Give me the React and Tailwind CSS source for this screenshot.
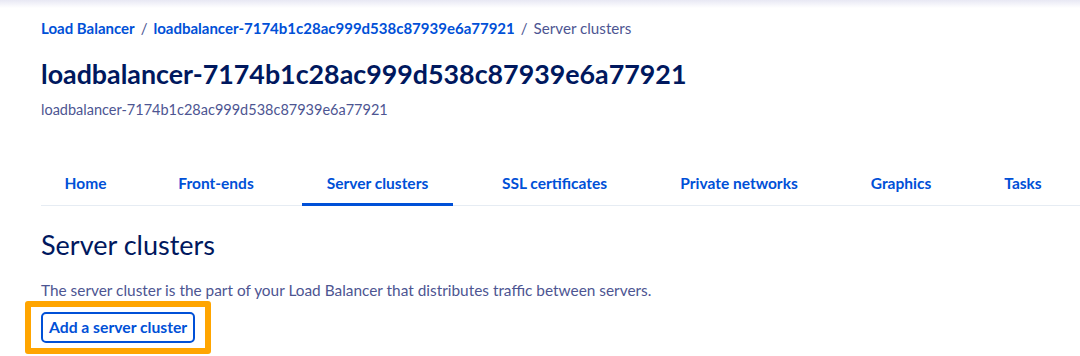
const tabs = [
  { label: 'Home', w: 'w-[89px]' },
  { label: 'Front-ends', w: 'w-[123px]' },
  { label: 'Server clusters', w: 'w-[151px]', active: true },
  { label: 'SSL certificates', w: 'w-[154px]' },
  { label: 'Private networks', w: 'w-[166px]' },
  { label: 'Graphics', w: 'w-[109px]' },
  { label: 'Tasks', w: 'w-[86px]' },
];

export default function App() {
  return (
    <div className="relative w-[1080px] h-[356px] bg-white overflow-hidden font-['Lato',sans-serif] text-[#4d5592]">
      <div className="h-[8px] bg-gradient-to-b from-[#e8e8f4] to-white" />
      <div className="pl-[41px]">
        <nav className="flex items-center h-[40px] text-[15px]">
          <a className="font-bold text-[#0050d7]">Load Balancer</a>
          <span className="mx-[6px]">/</span>
          <a className="font-bold text-[#0050d7]">loadbalancer-7174b1c28ac999d538c87939e6a77921</a>
          <span className="mx-[6px]">/</span>
          <span className="text-[15.2px]">Server clusters</span>
        </nav>
        <h1 className="mt-[8px] text-[26.8px] leading-[36px] font-bold text-[#00185e]">loadbalancer-7174b1c28ac999d538c87939e6a77921</h1>
        <p className="mt-[9px] text-[14.5px] leading-[18px]">loadbalancer-7174b1c28ac999d538c87939e6a77921</p>

        <div className="mt-[43px] flex gap-[24.5px] border-b border-[#e6ecf3] h-[44px]">
          {tabs.map((t) => (
            <div
              key={t.label}
              className={
                t.w +
                ' flex items-center justify-center pt-[3px] text-[15.5px] font-bold text-[#0050d7] border-b-[3px] -mb-px ' +
                (t.active ? 'border-[#0050d7]' : 'border-transparent')
              }
            >
              {t.label}
            </div>
          ))}
        </div>

        <h2 className="mt-[24px] text-[27px] leading-[30px] font-normal text-[#00185e]">Server clusters</h2>
        <p className="mt-[21px] text-[15.4px] leading-[18px]">
          The server cluster is the part of your Load Balancer that distributes traffic between servers.
        </p>
        <div className="mt-[2px] -ml-[16px] flex w-fit border-[6px] border-[#ffa500] rounded-[3px] px-[10px] pt-[5px] pb-[5px] bg-white">
          <button className="h-[31px] px-[6px] border-2 border-[#0050d7] rounded-[5px] text-[15.7px] font-bold text-[#0050d7] bg-white">
            Add a server cluster
          </button>
        </div>
      </div>
    </div>
  );
}
